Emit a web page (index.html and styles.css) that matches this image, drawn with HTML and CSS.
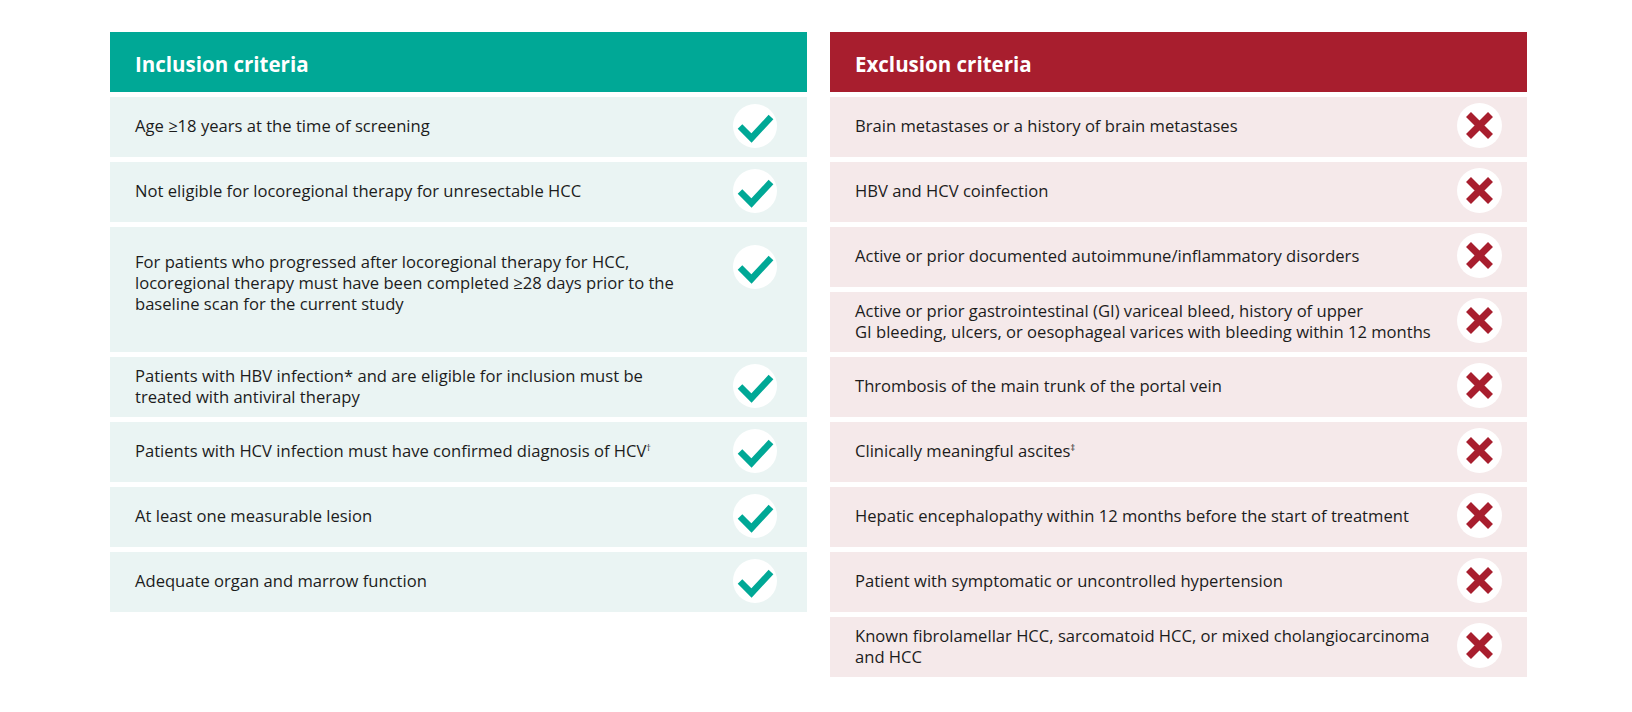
FILE: index.html
```html
<!DOCTYPE html>
<html lang="en">
<head>
<meta charset="utf-8">
<title>Inclusion and exclusion criteria</title>
<link rel="stylesheet" href="styles.css">
</head>
<body>
<main class="criteria">
  <section class="panel panel--incl">
    <h2 class="panel-head">Inclusion criteria</h2>
    <ul class="rows">
      <li class="row"><span class="row-text">Age ≥18 years at the time of screening</span><span class="badge"><svg viewBox="0 0 44 44" class="icon"><path d="M7 22.5 L18.5 34 L38 13"/></svg></span></li>
      <li class="row"><span class="row-text">Not eligible for locoregional therapy for unresectable HCC</span><span class="badge"><svg viewBox="0 0 44 44" class="icon"><path d="M7 22.5 L18.5 34 L38 13"/></svg></span></li>
      <li class="row row--tall"><span class="row-text">For patients who progressed after locoregional therapy for HCC,<br>locoregional therapy must have been completed ≥28 days prior to the<br>baseline scan for the current study</span><span class="badge"><svg viewBox="0 0 44 44" class="icon"><path d="M7 22.5 L18.5 34 L38 13"/></svg></span></li>
      <li class="row"><span class="row-text">Patients with HBV infection* and are eligible for inclusion must be<br>treated with antiviral therapy</span><span class="badge"><svg viewBox="0 0 44 44" class="icon"><path d="M7 22.5 L18.5 34 L38 13"/></svg></span></li>
      <li class="row"><span class="row-text">Patients with HCV infection must have confirmed diagnosis of HCV<sup class="mark">†</sup></span><span class="badge"><svg viewBox="0 0 44 44" class="icon"><path d="M7 22.5 L18.5 34 L38 13"/></svg></span></li>
      <li class="row"><span class="row-text">At least one measurable lesion</span><span class="badge"><svg viewBox="0 0 44 44" class="icon"><path d="M7 22.5 L18.5 34 L38 13"/></svg></span></li>
      <li class="row"><span class="row-text">Adequate organ and marrow function</span><span class="badge"><svg viewBox="0 0 44 44" class="icon"><path d="M7 22.5 L18.5 34 L38 13"/></svg></span></li>
    </ul>
  </section>
  <section class="panel panel--excl">
    <h2 class="panel-head">Exclusion criteria</h2>
    <ul class="rows">
      <li class="row"><span class="row-text">Brain metastases or a history of brain metastases</span><span class="badge"><svg viewBox="0 0 45 45" class="icon"><path d="M11.5 11.5 L33.5 33.5 M33.5 11.5 L11.5 33.5"/></svg></span></li>
      <li class="row"><span class="row-text">HBV and HCV coinfection</span><span class="badge"><svg viewBox="0 0 45 45" class="icon"><path d="M11.5 11.5 L33.5 33.5 M33.5 11.5 L11.5 33.5"/></svg></span></li>
      <li class="row"><span class="row-text">Active or prior documented autoimmune/inflammatory disorders</span><span class="badge"><svg viewBox="0 0 45 45" class="icon"><path d="M11.5 11.5 L33.5 33.5 M33.5 11.5 L11.5 33.5"/></svg></span></li>
      <li class="row"><span class="row-text">Active or prior gastrointestinal (GI) variceal bleed, history of upper<br>GI bleeding, ulcers, or oesophageal varices with bleeding within 12 months</span><span class="badge"><svg viewBox="0 0 45 45" class="icon"><path d="M11.5 11.5 L33.5 33.5 M33.5 11.5 L11.5 33.5"/></svg></span></li>
      <li class="row"><span class="row-text">Thrombosis of the main trunk of the portal vein</span><span class="badge"><svg viewBox="0 0 45 45" class="icon"><path d="M11.5 11.5 L33.5 33.5 M33.5 11.5 L11.5 33.5"/></svg></span></li>
      <li class="row"><span class="row-text">Clinically meaningful ascites<sup class="mark">‡</sup></span><span class="badge"><svg viewBox="0 0 45 45" class="icon"><path d="M11.5 11.5 L33.5 33.5 M33.5 11.5 L11.5 33.5"/></svg></span></li>
      <li class="row"><span class="row-text">Hepatic encephalopathy within 12 months before the start of treatment</span><span class="badge"><svg viewBox="0 0 45 45" class="icon"><path d="M11.5 11.5 L33.5 33.5 M33.5 11.5 L11.5 33.5"/></svg></span></li>
      <li class="row"><span class="row-text">Patient with symptomatic or uncontrolled hypertension</span><span class="badge"><svg viewBox="0 0 45 45" class="icon"><path d="M11.5 11.5 L33.5 33.5 M33.5 11.5 L11.5 33.5"/></svg></span></li>
      <li class="row"><span class="row-text">Known fibrolamellar HCC, sarcomatoid HCC, or mixed cholangiocarcinoma<br>and HCC</span><span class="badge"><svg viewBox="0 0 45 45" class="icon"><path d="M11.5 11.5 L33.5 33.5 M33.5 11.5 L11.5 33.5"/></svg></span></li>
    </ul>
  </section>
</main>
</body>
</html>
```

FILE: styles.css
```css
html, body {
  margin: 0;
  padding: 0;
  background: #ffffff;
}

body {
  font-family: "Open Sans", "Noto Sans", "Liberation Sans", sans-serif;
  color: #1c1c1c;
}

.criteria {
  display: grid;
  grid-template-columns: 697px 697px;
  column-gap: 23px;
  align-items: start;
  padding: 32px 0 0 110px;
}

.panel {
  display: flex;
  flex-direction: column;
  gap: 5px;
}

.panel-head {
  margin: 0;
  height: 60px;
  box-sizing: border-box;
  padding: 3px 25px 0;
  display: flex;
  align-items: center;
  color: #ffffff;
  font-size: 20.5px;
  font-weight: 700;
  letter-spacing: 0;
}

.panel--incl .panel-head {
  background: #00a896;
}

.panel--excl .panel-head {
  background: #a81e2e;
}

.rows {
  list-style: none;
  margin: 0;
  padding: 0;
  display: flex;
  flex-direction: column;
  gap: 5px;
}

.row {
  display: flex;
  align-items: center;
  justify-content: space-between;
  min-height: 60px;
  box-sizing: border-box;
  padding: 0 30px 3px 25px;
}

.panel--incl .row {
  background: #eaf4f3;
}

.panel--excl .row {
  background: #f5e9ea;
  padding-right: 25px;
}

.row--tall {
  height: 125px;
  align-items: flex-start;
  padding-bottom: 0;
}

.row--tall .row-text {
  padding-top: 24px;
}

.row--tall .badge {
  margin-top: 18px;
}

.row-text {
  font-size: 16.6px;
  line-height: 21px;
}

.mark {
  font-size: 9px;
  line-height: 0;
  vertical-align: 6px;
}

.badge {
  flex: 0 0 auto;
  width: 44px;
  height: 44px;
  border-radius: 50%;
  background: #ffffff;
  display: flex;
  align-items: center;
  justify-content: center;
}

.panel--excl .badge {
  width: 45px;
  height: 45px;
}

.icon {
  width: 100%;
  height: 100%;
  fill: none;
  stroke-linecap: butt;
  stroke-linejoin: miter;
}

.panel--incl .icon {
  stroke: #00a896;
  stroke-width: 6.5;
}

.panel--excl .icon {
  stroke: #a81e2e;
  stroke-width: 7;
}
```
